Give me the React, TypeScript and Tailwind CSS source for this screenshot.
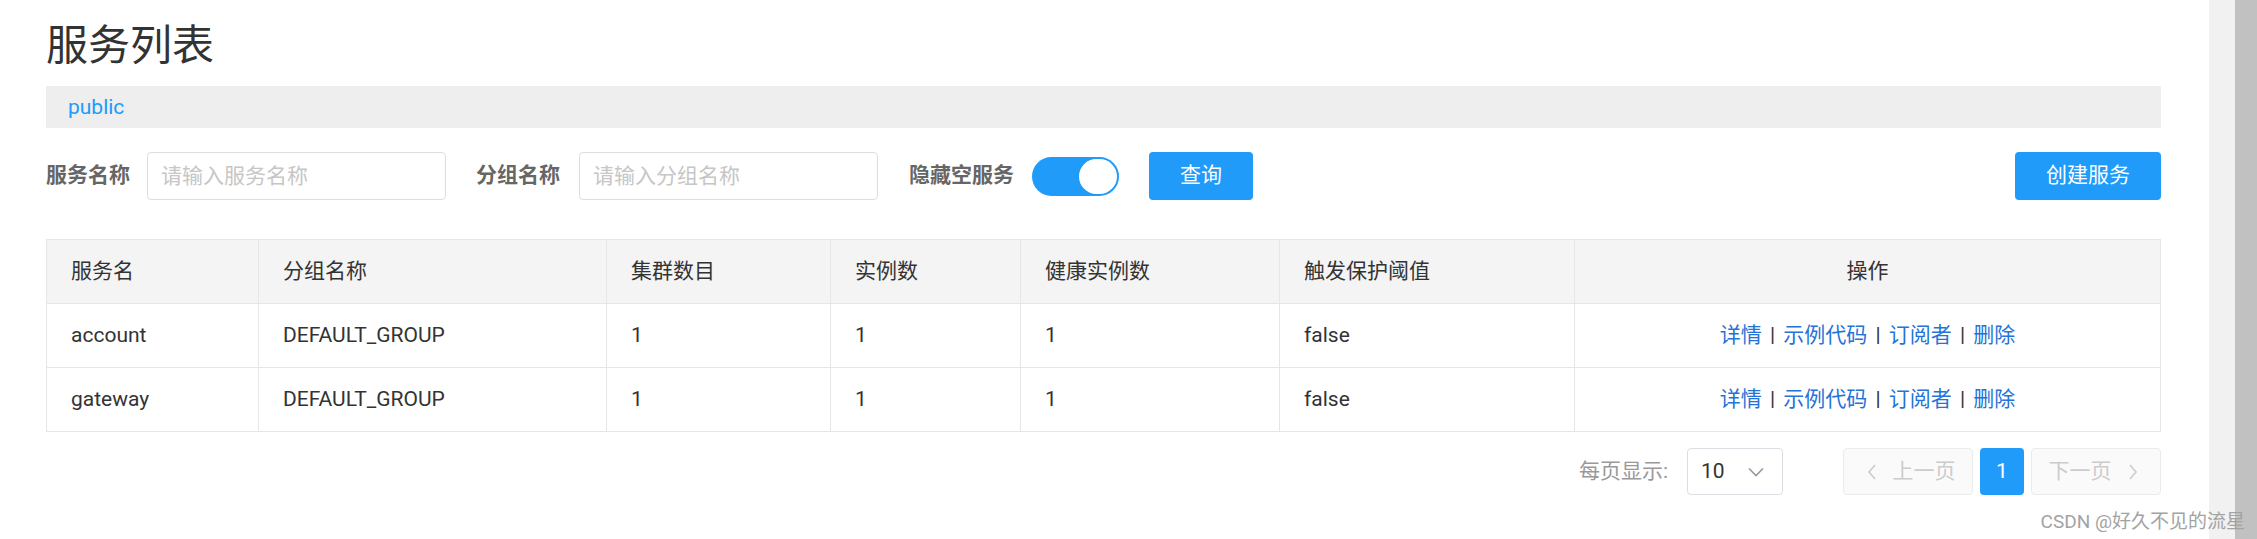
import React from 'react';

const rows = [
  { name: 'account', group: 'DEFAULT_GROUP', clusters: 1, instances: 1, healthy: 1, threshold: 'false' },
  { name: 'gateway', group: 'DEFAULT_GROUP', clusters: 1, instances: 1, healthy: 1, threshold: 'false' },
];

const cols = [212, 348, 224, 190, 259, 295, 586];

const ChevronLeft = () => (
  <svg width="10" height="18" viewBox="0 0 10 18" fill="none" stroke="currentColor" strokeWidth="1.6">
    <polyline points="8,2 2,9 8,16" />
  </svg>
);

const ChevronRight = () => (
  <svg width="10" height="18" viewBox="0 0 10 18" fill="none" stroke="currentColor" strokeWidth="1.6">
    <polyline points="2,2 8,9 2,16" />
  </svg>
);

const App = () => {
  return (
    <div className="relative flex h-screen w-full bg-white font-[Roboto,'Noto_Sans_CJK_SC',sans-serif] text-[#333]">
      <div className="flex-1 pl-[46px] pr-[48px]">
        <div className="h-[86px] pt-[25px] text-[42px] leading-[42px] font-normal text-[#333]">服务列表</div>

        <div className="h-[42px] bg-[#eeeeee] pl-[22px] text-[21px] leading-[42px] text-[#209bfa]">public</div>

        <div className="mt-[24px] flex h-[48px] items-center">
          <span className="shrink-0 text-[21px] font-bold text-[#666]">服务名称</span>
          <input
            className="ml-[17px] h-[48px] w-[299px] rounded-[4px] border border-[#dcdee3] pl-[13px] text-[21px] outline-none placeholder:text-[#c6c6c6]"
            placeholder="请输入服务名称"
          />
          <span className="ml-[30px] shrink-0 text-[21px] font-bold text-[#666]">分组名称</span>
          <input
            className="ml-[19px] h-[48px] w-[299px] rounded-[4px] border border-[#dcdee3] pl-[13px] text-[21px] outline-none placeholder:text-[#c6c6c6]"
            placeholder="请输入分组名称"
          />
          <span className="ml-[31px] shrink-0 text-[21px] font-bold text-[#666]">隐藏空服务</span>
          <div className="ml-[18px] flex h-[39px] w-[87px] shrink-0 items-center justify-end rounded-full bg-[#209bfa] pr-[2px]">
            <div className="h-[35px] w-[38px] rounded-full bg-white" />
          </div>
          <button className="ml-[30px] h-[48px] w-[104px] rounded-[4px] bg-[#209bfa] text-[21px] text-white">查询</button>
          <button className="ml-auto h-[48px] w-[146px] rounded-[4px] bg-[#209bfa] text-[21px] text-white">创建服务</button>
        </div>

        <table className="mt-[39px] w-[2114px] table-fixed border-collapse border border-[#e6e6e6] text-[21px]">
          <colgroup>
            {cols.map((w, i) => (
              <col key={i} style={{ width: w }} />
            ))}
          </colgroup>
          <thead>
            <tr className="h-[64px] bg-[#f4f4f4]">
              <th className="border border-[#e6e6e6] pl-[24px] text-left font-normal">服务名</th>
              <th className="border border-[#e6e6e6] pl-[24px] text-left font-normal">分组名称</th>
              <th className="border border-[#e6e6e6] pl-[24px] text-left font-normal">集群数目</th>
              <th className="border border-[#e6e6e6] pl-[24px] text-left font-normal">实例数</th>
              <th className="border border-[#e6e6e6] pl-[24px] text-left font-normal">健康实例数</th>
              <th className="border border-[#e6e6e6] pl-[24px] text-left font-normal">触发保护阈值</th>
              <th className="border border-[#e6e6e6] text-center font-normal">操作</th>
            </tr>
          </thead>
          <tbody>
            {rows.map((r) => (
              <tr key={r.name} className="h-[64px]">
                <td className="border border-[#e6e6e6] pl-[24px]">{r.name}</td>
                <td className="border border-[#e6e6e6] pl-[24px]">{r.group}</td>
                <td className="border border-[#e6e6e6] pl-[24px]">{r.clusters}</td>
                <td className="border border-[#e6e6e6] pl-[24px]">{r.instances}</td>
                <td className="border border-[#e6e6e6] pl-[24px]">{r.healthy}</td>
                <td className="border border-[#e6e6e6] pl-[24px]">{r.threshold}</td>
                <td className="border border-[#e6e6e6] text-center">
                  <a className="text-[#2473d8]">详情</a>
                  <span className="px-[3px]"> | </span>
                  <a className="text-[#2473d8]">示例代码</a>
                  <span className="px-[3px]"> | </span>
                  <a className="text-[#2473d8]">订阅者</a>
                  <span className="px-[3px]"> | </span>
                  <a className="text-[#2473d8]">删除</a>
                </td>
              </tr>
            ))}
          </tbody>
        </table>

        <div className="mt-[16px] flex h-[47px] items-center justify-end text-[21px]">
          <span className="text-[#999]">每页显示:</span>
          <div className="ml-[19px] flex h-[47px] w-[96px] items-center justify-between rounded-[4px] border border-[#dcdee3] pl-[13px] pr-[18px]">
            <span className="text-[#333]">10</span>
            <svg width="16" height="10" viewBox="0 0 16 10" fill="none" stroke="#999" strokeWidth="1.6">
              <polyline points="1,1.5 8,8.5 15,1.5" />
            </svg>
          </div>
          <div className="ml-[60px] flex h-[47px] w-[130px] items-center justify-center gap-[16px] rounded-[4px] border border-[#ebebeb] bg-[#fafafa] pl-[6px] text-[#cccccc]">
            <ChevronLeft />
            <span>上一页</span>
          </div>
          <div className="ml-[7px] flex h-[47px] w-[44px] items-center justify-center rounded-[4px] bg-[#209bfa] text-white">1</div>
          <div className="ml-[7px] flex h-[47px] w-[130px] items-center justify-center gap-[16px] rounded-[4px] border border-[#ebebeb] bg-[#fafafa] pr-[6px] text-[#cccccc]">
            <span>下一页</span>
            <ChevronRight />
          </div>
        </div>
      </div>

      <div className="w-[26px] shrink-0 bg-[#f1f1f1]" />
      <div className="w-[23px] shrink-0 bg-[#c1c1c1]" />

      <div className="absolute bottom-[6px] right-[12px] text-[19px] leading-[22px] text-[#a3a3a3]">CSDN @好久不见的流星</div>
    </div>
  );
};

export default App;
